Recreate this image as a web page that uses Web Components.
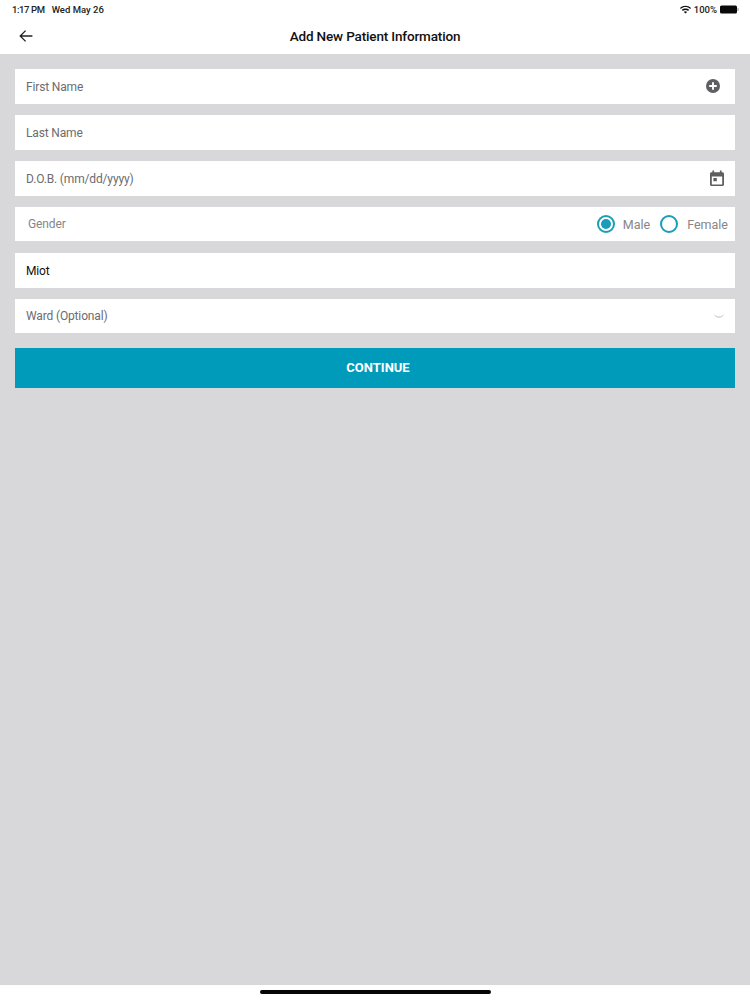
<!DOCTYPE html>
<html>
<head>
<meta charset="utf-8">
<title>Add New Patient Information</title>
<style>
  html, body { margin: 0; padding: 0; }
  body { width: 750px; height: 1000px; overflow: hidden; font-family: Roboto, "Liberation Sans", sans-serif; }
</style>
</head>
<body>
<patient-screen>
  <status-bar slot="status"></status-bar>
  <nav-header slot="header">Add New Patient Information</nav-header>
  <form-field>First Name<svg slot="icon" width="16" height="16" viewBox="0 0 16 16" style="margin:0 4px 1px 0"><circle cx="8" cy="8" r="7" fill="#5f5f62"/><path d="M8 4.2v7.6M4.2 8h7.6" stroke="#fff" stroke-width="1.9"/></svg></form-field>
  <form-field>Last Name</form-field>
  <form-field>D.O.B. (mm/dd/yyyy)<svg slot="icon" width="16" height="17" viewBox="0 0 16 17"><path fill="#5f5f62" fill-rule="evenodd" d="M3.4 0.6h1.7v1.6h5.8V0.6h1.7v1.6h.9c.8 0 1.5.7 1.5 1.5v10.9c0 .8-.7 1.5-1.5 1.5H2.5c-.8 0-1.5-.7-1.5-1.5V3.7c0-.8.7-1.5 1.5-1.5h.9zM2.8 6.4v8h10.4v-8zM4.4 8h3.4v3.3H4.4z"/></svg></form-field>
  <gender-field></gender-field>
  <form-field filled>Miot</form-field>
  <form-field style="height:34px">Ward (Optional)<svg slot="icon" width="10" height="5" viewBox="0 0 10 5" style="margin-right:1px"><path d="M.5 1C3 3.8 7 3.8 9.5 1" fill="none" stroke="#bdbdc0" stroke-width="1"/></svg></form-field>
  <primary-button>CONTINUE</primary-button>
</patient-screen>

<script>
customElements.define('patient-screen', class extends HTMLElement {
  connectedCallback() {
    this.attachShadow({mode: 'open'}).innerHTML = `
      <style>
        :host { display: flex; flex-direction: column; width: 750px; height: 1000px; background: #fff; }
        .content { flex: 1; background: #d8d7d9; padding: 15px 15px 0; display: flex; flex-direction: column; gap: 11px; }
        .home { height: 15px; display: flex; justify-content: center; padding-top: 5px; box-sizing: border-box; }
        .home i { display: block; width: 231px; height: 4px; border-radius: 2px; background: #050505; }
      </style>
      <slot name="status"></slot>
      <slot name="header"></slot>
      <div class="content"><slot></slot></div>
      <div class="home"><i></i></div>
    `;
  }
});

customElements.define('status-bar', class extends HTMLElement {
  connectedCallback() {
    this.attachShadow({mode: 'open'}).innerHTML = `
      <style>
        :host { display: flex; align-items: center; height: 18px; padding: 0 11px 0 12px; background: #fff; color: #222; font: 500 9.5px Roboto, "Liberation Sans", sans-serif; }
        .time { letter-spacing: -.4px; }
        .date { margin-left: 7px; }
        .right { margin-left: auto; display: flex; align-items: center; gap: 3px; }
      </style>
      <span class="time">1:17 PM</span><span class="date">Wed May 26</span>
      <div class="right">
        <svg width="11" height="9" viewBox="0 0 11 9"><path d="M5.5 8.6 3.9 6.9c.9-.8 2.3-.8 3.2 0zM2.9 5.9 1.8 4.8c2-1.9 5.4-1.9 7.4 0L8.1 5.9c-1.5-1.3-3.7-1.3-5.2 0zM.9 3.9 0 2.9c3-2.9 8-2.9 11 0l-.9 1C7.5 1.5 3.5 1.5.9 3.9z" fill="#111"/></svg>
        <span>100%</span>
        <svg width="19" height="9" viewBox="0 0 19 9"><rect x="0" y="0.5" width="17" height="8" rx="1.5" fill="#0a0a0a"/><rect x="17.5" y="3" width="1" height="3" fill="#999"/></svg>
      </div>
    `;
  }
});

customElements.define('nav-header', class extends HTMLElement {
  connectedCallback() {
    this.attachShadow({mode: 'open'}).innerHTML = `
      <style>
        :host { display: flex; align-items: center; justify-content: center; position: relative; height: 36px; background: #fff; color: #111; font: 500 13.5px Roboto, "Liberation Sans", sans-serif; letter-spacing: -.15px; }
        svg { position: absolute; left: 19px; top: 11px; }
      </style>
      <svg width="14" height="14" viewBox="0 0 14 14"><path d="M13.4 7H1.6M6.6 1.6 1.2 7l5.4 5.4" fill="none" stroke="#222" stroke-width="1.3"/></svg>
      <slot></slot>
    `;
  }
});

customElements.define('form-field', class extends HTMLElement {
  connectedCallback() {
    this.attachShadow({mode: 'open'}).innerHTML = `
      <style>
        :host { display: flex; align-items: center; justify-content: space-between; height: 35px; padding: 0 10px 0 11px; background: #fff; color: #6c6c6f; font: 400 12px Roboto, "Liberation Sans", sans-serif; letter-spacing: -.15px; }
        :host([filled]) { color: #111; }
        .icon { display: flex; align-items: center; }
      </style>
      <span class="text"><slot></slot></span>
      <span class="icon"><slot name="icon"></slot></span>
    `;
  }
});

customElements.define('gender-field', class extends HTMLElement {
  connectedCallback() {
    this.attachShadow({mode: 'open'}).innerHTML = `
      <style>
        :host { display: flex; align-items: center; height: 34px; margin-bottom: 1px; padding: 0 7px 0 13px; background: #fff; color: #868689; font: 400 12.5px Roboto, "Liberation Sans", sans-serif; }
        .label { margin-right: auto; font-size: 12px; letter-spacing: -.1px; }
        .opt { display: flex; align-items: center; gap: 9px; }
        .opt.first { gap: 8px; }
        .opt + .opt { margin-left: 10px; }
        .radio { width: 18px; height: 18px; box-sizing: border-box; border: 2px solid #1a9db8; border-radius: 50%; display: flex; align-items: center; justify-content: center; }
        .radio.on::after { content: ""; width: 10px; height: 10px; border-radius: 50%; background: #1a9db8; }
      </style>
      <span class="label">Gender</span>
      <span class="opt first"><span class="radio on"></span>Male</span>
      <span class="opt"><span class="radio"></span>Female</span>
    `;
  }
});

customElements.define('primary-button', class extends HTMLElement {
  connectedCallback() {
    this.attachShadow({mode: 'open'}).innerHTML = `
      <style>
        :host { display: flex; align-items: center; justify-content: center; height: 40px; margin-top: 4px; padding-left: 6px; background: #009bbb; color: #fff; font: 700 13px Roboto, "Liberation Sans", sans-serif; }
        span { margin-bottom: 1px; }
      </style>
      <span><slot></slot></span>
    `;
  }
});
</script>
</body>
</html>
